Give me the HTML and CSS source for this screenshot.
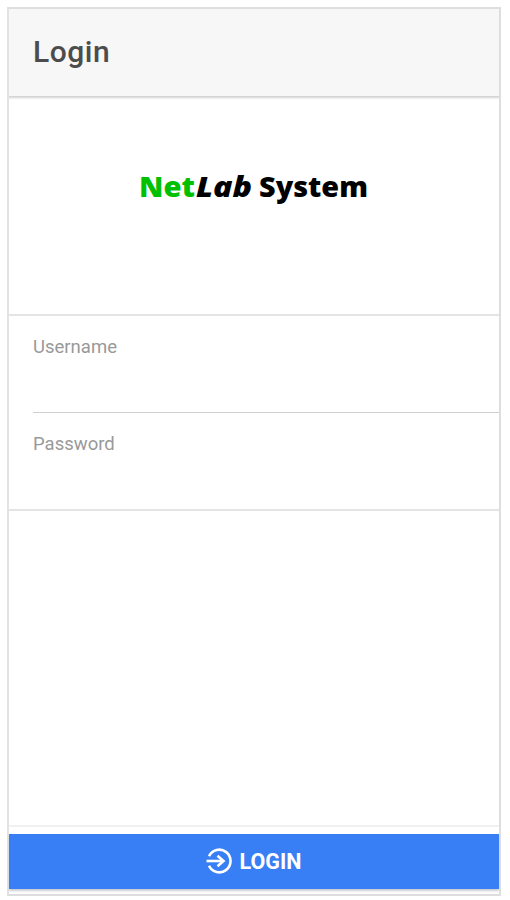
FILE: index.html
```
<!DOCTYPE html>
<html lang="en">
  <head>
    <meta charset="UTF-8" />
    <meta name="viewport" content="width=device-width, initial-scale=1.0" />
    <title>Login</title>
    <link rel="stylesheet" href="styles.css" />
  </head>
  <body>
    <form class="screen">
      <header class="header">
        <h1 class="title">Login</h1>
      </header>
      <main class="content">
        <div class="brand">
          <svg class="logo" viewBox="0 0 240 50" role="img" aria-label="NetLab System">
            <text class="net" x="5" y="32" textLength="56" lengthAdjust="spacingAndGlyphs">Net</text>
            <text class="lab" x="62" y="32" textLength="56" lengthAdjust="spacingAndGlyphs">Lab</text>
            <text x="125" y="32" textLength="109" lengthAdjust="spacingAndGlyphs">System</text>
          </svg>
        </div>
        <div class="list">
          <div class="item">
            <label for="username">Username</label>
            <input id="username" type="text" />
          </div>
          <div class="item">
            <label for="password">Password</label>
            <input id="password" type="password" />
          </div>
        </div>
      </main>
      <footer class="footer">
        <button class="login" type="button">
          <svg class="icon" viewBox="0 0 26 26">
            <path d="M3 8.2A11.3 11.3 0 1 1 3 17.8" />
            <path d="M0.5 13H17" />
            <path d="M11.5 7.8L17.5 13L11.5 18.2" />
          </svg>
          <span>LOGIN</span>
        </button>
      </footer>
    </form>
  </body>
</html>
```

FILE: styles.css
```
* {
  margin: 0;
  padding: 0;
  box-sizing: border-box;
}
body {
  padding: 7px;
  background: #fff;
  font-family: Roboto, "Liberation Sans", sans-serif;
}
.screen {
  display: flex;
  flex-direction: column;
  width: 494px;
  height: 889px;
  border: 2px solid #dedede;
  border-left-color: #e3e3e3;
}
.header {
  display: flex;
  align-items: center;
  height: 87px;
  padding: 0 0 2px 24px;
  background: #f7f7f7;
  box-shadow: 0 1px 2px 1px #d2d2d2;
  clip-path: inset(0 0 -5px 0);
}
.title {
  font-size: 30px;
  font-weight: 500;
  letter-spacing: 0.5px;
  line-height: 36px;
  color: #4c4c4c;
}
.content {
  flex: 1;
}
.brand {
  display: flex;
  justify-content: center;
  height: 218px;
  padding-top: 69px;
}
.logo {
  width: 240px;
  height: 50px;
  font-family: "Open Sans", sans-serif;
  font-size: 28.5px;
  font-weight: 800;
}
.net {
  fill: #00c000;
}
.lab {
  font-style: italic;
}
.list {
  border-top: 2px solid #e4e4e4;
  border-bottom: 2px solid #e4e4e4;
}
.item {
  display: flex;
  flex-direction: column;
  height: 96px;
  margin-left: 24px;
  padding-top: 19px;
}
.item:first-child {
  height: 97px;
  border-bottom: 1px solid #cfcfcf;
}
.item label {
  font-size: 18.5px;
  line-height: 24px;
  color: #999;
}
.item input {
  height: 40px;
  border: none;
  outline: none;
  background: transparent;
  font-size: 22px;
}
.footer {
  height: 69px;
  padding-top: 7px;
  border-top: 2px solid #f0f0f0;
}
.login {
  display: flex;
  align-items: center;
  justify-content: center;
  gap: 8px;
  width: 100%;
  height: 55px;
  padding: 0 1px 1px 0;
  border: none;
  background: #387ef5;
  box-shadow: 0 2px 2px #c8ccd2;
  color: #fff;
  font-family: inherit;
  font-size: 21.5px;
  font-weight: 700;
}
.icon {
  width: 26px;
  height: 26px;
  fill: none;
  stroke: #fff;
  stroke-width: 2.6;
}
```
